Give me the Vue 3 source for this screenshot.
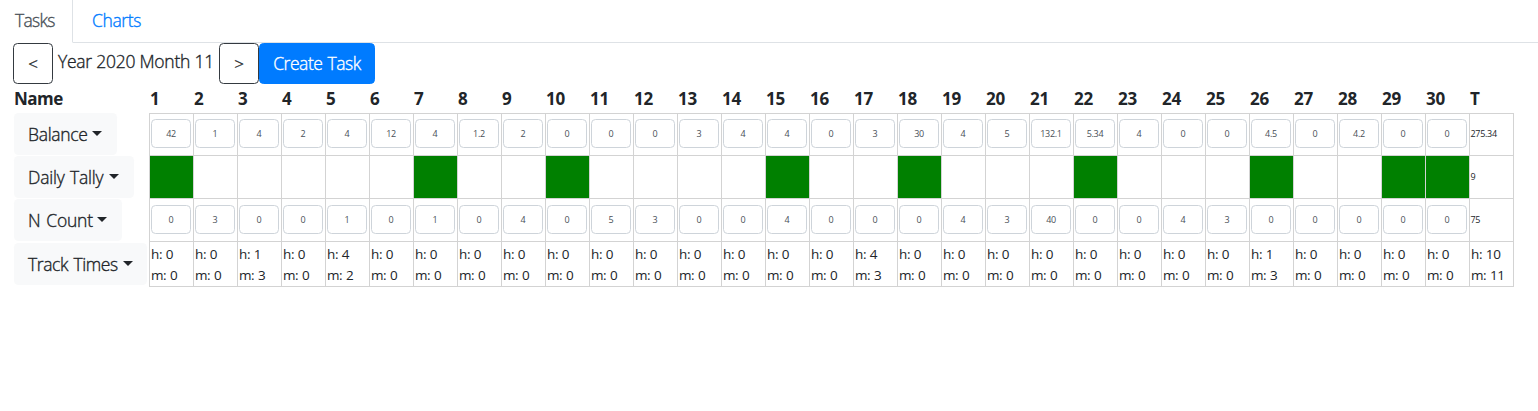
<script setup>
const days = Array.from({ length: 30 }, (_, i) => i + 1)
const tasks = [
  {
    name: 'Balance', kind: 'number', total: '275.34', width: 'w-balance',
    values: [42, 1, 4, 2, 4, 12, 4, 1.2, 2, 0, 0, 0, 3, 4, 4, 0, 3, 30, 4, 5, 132.1, 5.34, 4, 0, 0, 4.5, 0, 4.2, 0, 0],
  },
  {
    name: 'Daily Tally', kind: 'tally', total: '9', width: 'w-tally',
    values: days.map((d) => [1, 7, 10, 15, 18, 22, 26, 29, 30].includes(d)),
  },
  {
    name: 'N Count', kind: 'number', total: '75', width: 'w-count',
    values: [0, 3, 0, 0, 1, 0, 1, 0, 4, 0, 5, 3, 0, 0, 4, 0, 0, 0, 4, 3, 40, 0, 0, 4, 3, 0, 0, 0, 0, 0],
  },
  {
    name: 'Track Times', kind: 'time', total: [10, 11], width: 'w-times',
    values: days.map((d) => ({ 3: [1, 3], 5: [4, 2], 17: [4, 3], 26: [1, 3] })[d] || [0, 0]),
  },
]
</script>

<template>
  <div class="page">
    <nav class="tabs">
      <a class="tab active">Tasks</a>
      <a class="tab link">Charts</a>
    </nav>
    <div class="toolbar">
      <button class="btn outline">&lt;</button>
      <span class="period">Year 2020 Month 11</span>
      <button class="btn outline">&gt;</button>
      <button class="btn primary">Create Task</button>
    </div>
    <div class="table">
      <div class="row head">
        <div class="name">Name</div>
        <div v-for="d in days" :key="d" class="day">{{ d }}</div>
        <div class="day">T</div>
      </div>
      <div v-for="t in tasks" :key="t.name" class="row" :class="t.kind">
        <div class="name">
          <button class="drop" :class="t.width"><span class="label">{{ t.name }}</span><i class="caret"></i></button>
        </div>
        <div v-for="(v, i) in t.values" :key="i" class="cell" :class="{ done: t.kind === 'tally' && v }">
          <input v-if="t.kind === 'number'" class="field" type="text" :value="v" />
          <template v-else-if="t.kind === 'time'">
            <div>h: {{ v[0] }}</div>
            <div>m: {{ v[1] }}</div>
          </template>
        </div>
        <div class="cell total">
          <template v-if="t.kind === 'time'">
            <div>h: {{ t.total[0] }}</div>
            <div>m: {{ t.total[1] }}</div>
          </template>
          <template v-else>{{ t.total }}</template>
        </div>
      </div>
    </div>
  </div>
</template>

<style>
body { background: #fff; overflow: hidden; }
</style>

<style scoped>
.page {
  font-family: "Open Sans", "Noto Sans", sans-serif;
  font-size: 17.5px;
  font-weight: 300;
  letter-spacing: -0.45px;
  color: #212529;
}
.page * { box-sizing: border-box; }
button, input { font: inherit; letter-spacing: inherit; margin: 0; }
.tabs { display: flex; height: 43px; }
.tab { border-bottom: 1px solid #dee2e6; line-height: 41px; white-space: nowrap; }
.tab, .btn, .period, .label { -webkit-text-stroke: 0.35px currentColor; }
.active { width: 73px; padding-left: 15px; color: #495057; border-right: 1px solid #dee2e6; border-bottom-color: #fff; letter-spacing: -0.7px; }
.link { flex: 1; padding-left: 19px; color: #007bff; letter-spacing: -0.4px; }
.toolbar { display: flex; height: 41px; padding-left: 13px; }
.btn { height: 41px; border-radius: 4.5px; padding: 0 0 1px; border: 1px solid #343a40; background: #fff; color: #212529; white-space: nowrap; }
.outline { width: 40px; font-size: 17px; }
.primary { width: 116px; background: #007bff; border-color: #007bff; color: #fff; word-spacing: 1px; }
.period { width: 166px; padding-left: 5px; line-height: 37px; white-space: nowrap; letter-spacing: -0.25px; }
.table { padding-left: 14px; }
.row { display: grid; grid-template-columns: 136px repeat(31, 44px); height: 43px; }
.head { height: 29px; font-size: 17px; font-weight: 700; line-height: 29px; letter-spacing: -0.2px; }
.head .name { letter-spacing: -0.5px; }
.day { border-bottom: 1px solid #d3d3d3; }
.name { white-space: nowrap; }
.row:not(.head) .name { border-right: 1px solid #d3d3d3; display: flex; align-items: flex-start; }
.cell { border-right: 1px solid #d3d3d3; border-bottom: 1px solid #d3d3d3; padding-left: 1px; }
.done { background: #008000 padding-box; }
.drop { height: 42px; border: 0; border-radius: 4.5px; background: #f8f9fa; color: #212529; padding: 0 15px 0 14px; display: flex; align-items: center; justify-content: space-between; }
.w-balance { width: 103px; letter-spacing: -0.3px; }
.w-tally { width: 120px; letter-spacing: -0.2px; word-spacing: 1px; }
.w-count { width: 108px; letter-spacing: -0.2px; word-spacing: 1.5px; }
.w-times { width: 133px; margin-top: 1px; padding-right: 14px; letter-spacing: -0.4px; word-spacing: 1.2px; }
.caret { border: 5px solid transparent; border-top-color: #212529; border-bottom: 0; margin-bottom: 2px; }
.field { display: block; width: 40px; height: 29px; margin-top: 6px; border: 1px solid #ced4da; border-radius: 4.5px; background: #fff; color: #495057; font-size: 9px; font-weight: 400; letter-spacing: -0.3px; text-align: center; padding: 0; outline: 0; }
.total { padding-left: 0.5px; font-size: 9px; font-weight: 400; line-height: 42px; letter-spacing: -0.3px; }
.time { height: 45px; }
.time .cell { padding-top: 2px; padding-left: 1px; font-size: 13.5px; font-weight: 400; line-height: 21px; letter-spacing: -0.4px; word-spacing: 0.7px; white-space: nowrap; }
</style>
